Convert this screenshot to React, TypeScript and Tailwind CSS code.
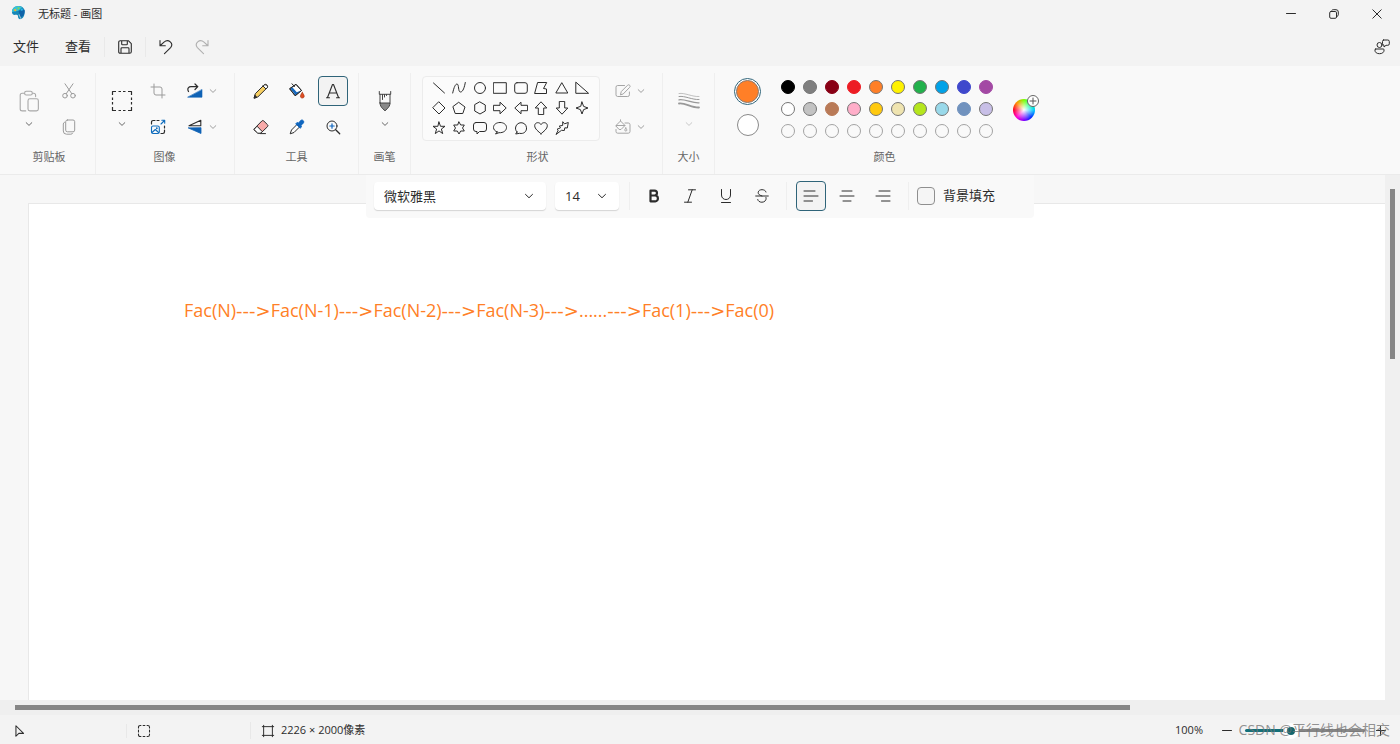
import { useState } from "react";
import type { ReactNode } from "react";

const SHAPES: { name: string; d: string }[] = [
    { name: "直线", d: "M1.5 2 12.5 12" },
    { name: "曲线", d: "M.7 12C2 6 3.500 3 5 3c2.200 0 .8 8 3.500 8C11 11 12.500 6 13.300 1.500" },
    { name: "椭圆形", d: "M12.500 7a5.500 5.500 0 1 1-11 0 5.500 5.500 0 0 1 11 0Z" },
    { name: "矩形", d: "M.7 1.700h12.600v10.600H.7Z" },
    { name: "圆角矩形", d: "M3 1.700h8q2.300 0 2.300 2.300v6q0 2.300-2.300 2.300H3Q.7 12.300.7 10V4Q.7 1.700 3 1.700Z" },
    { name: "多边形", d: "M4 1.500h8.700L9.500 7.500l3 .5v4.500H1Z" },
    { name: "三角形", d: "M7 2 12.800 12H1.200Z" },
    { name: "直角三角形", d: "M.8 1.500V12.300H13.200Z" },
    { name: "菱形", d: "M7 1 13 7 7 13 1 7Z" },
    { name: "五边形", d: "M7 1.500 13 6 10.800 12.500H3.200L1 6Z" },
    { name: "六边形", d: "M7 1 12.300 4v6L7 13 1.700 10V4Z" },
    { name: "右箭头", d: "M.8 4.300H7V1.200L13.200 7 7 12.800V9.700H.8Z" },
    { name: "左箭头", d: "M13.200 4.300H7V1.200L.8 7 7 12.800V9.700h6.200Z" },
    { name: "向上箭头", d: "M4.300 13.200V7H1.200L7 .8 12.800 7H9.700v6.200Z" },
    { name: "向下箭头", d: "M4.300.8V7H1.200L7 13.200 12.800 7H9.700V.8Z" },
    { name: "四角星", d: "M7 1 8.600 5.400 13 7 8.600 8.600 7 13 5.400 8.600 1 7 5.400 5.400Z" },
    { name: "五角星", d: "M7 1 8.500 5.300H13L9.400 8 10.700 12.600 7 9.900 3.300 12.600 4.600 8 1 5.300H5.500Z" },
    { name: "六角星", d: "M7 1 8.700 4H12.300L10.500 7 12.300 10H8.700L7 13 5.300 10H1.700L3.500 7 1.700 4H5.300Z" },
    { name: "圆角矩形标注", d: "M3 1.500h8q2.500 0 2.500 2.500v4q0 2.500-2.500 2.500H6.500L4 13V10.500H3Q.5 10.500.5 8V4Q.5 1.500 3 1.500Z" },
    { name: "椭圆形标注", d: "M4.200 11 2.500 13 6 11.700C10.500 12 13.500 9.500 13.500 6.500S10.600 1.500 7 1.500.5 3.500.5 6.500C.5 8.500 2 10.200 4.200 11Z" },
    { name: "云形标注", d: "M3 11 1.700 13 5.500 12.300C10 13.300 12.800 10.200 12.500 6.800 12.300 3.500 9.800 1.700 7 1.700S1.700 4 1.500 7C1.500 8.700 2 10 3 11Z" },
    { name: "心形", d: "M7 12.800C4.500 10.500.7 8 .7 4.700.7 1.200 5.500.6 7 3.600 8.500.6 13.300 1.200 13.300 4.700 13.300 8 9.500 10.500 7 12.800Z" },
    { name: "闪电形", d: "M8 1 9.500 2.800 13.300 1.500 12.300 7 9.800 6.800 9.300 9.500 6.500 9.300 1 13.500 3.200 9.300 2 8.300 5.500 6.800 4.300 5 7.300 4.500Z" },
];

const COLORS = [
    ["#000000", "#7f7f7f", "#880015", "#ed1c24", "#ff7f27", "#fff200", "#22b14c", "#00a2e8", "#3f48cc", "#a349a4"],
    ["#ffffff", "#c3c3c3", "#b97a57", "#ffaec9", "#ffc90e", "#efe4b0", "#b5e61d", "#99d9ea", "#7092be", "#c8bfe7"],
    ["", "", "", "", "", "", "", "", "", ""],
];

// these swatches have no visible outline
const PLAIN = ["#000000", "#880015", "#ed1c24", "#b97a57", "#3f48cc", "#7092be", "#a349a4"];

const CALLS = ["Fac(N)", "Fac(N-1)", "Fac(N-2)", "Fac(N-3)", "......", "Fac(1)", "Fac(0)"];

function Icon({ box = 16, className = "size-4", children }: { box?: number; className?: string; children: ReactNode }) {
    return (
        <svg viewBox={`0 0 ${box} ${box}`} className={`${className} shrink-0`} fill="none" stroke="currentColor" strokeLinecap="round" strokeLinejoin="round" aria-hidden="true">
            {children}
        </svg>
    );
}

function Chevron({ className = "size-2" }: { className?: string }) {
    return (
        <Icon box={8} className={className}>
            <path d="M1.200 2.700 4 5.400 6.800 2.700" strokeWidth=".8" />
        </Icon>
    );
}

function Tool({ label, active, onClick, children }: { label: string; active?: boolean; onClick?: () => void; children: ReactNode }) {
    return (
        <div className="flex size-9 items-center justify-center">
            <button
                aria-label={label}
                onClick={onClick}
                className={`flex size-[30px] items-center justify-center rounded border ${active ? "border-[#2f6479] bg-[#f3f3f3]" : "border-transparent"}`}
            >
                {children}
            </button>
        </div>
    );
}

function SplitTool({ label, children }: { label: string; children: ReactNode }) {
    return (
        <button aria-label={label} className="flex h-9 w-12 items-center justify-center gap-1.5">
            {children}
            <span className="text-[#888]"><Chevron /></span>
        </button>
    );
}

function BigTool({ label, muted, children }: { label: string; muted?: boolean; children: ReactNode }) {
    return (
        <button aria-label={label} className="flex w-9 flex-col items-center gap-2 pt-[17px]">
            {children}
            <span className={muted ? "text-[#bbb]" : "text-[#444]"}><Chevron /></span>
        </button>
    );
}

function Group({ title, className, children }: { title: string; className: string; children: ReactNode }) {
    return (
        <section aria-label={title} className={`flex shrink-0 flex-col items-center ${className}`}>
            <div className="flex h-[72px]">{children}</div>
            <h2 className="mt-0.5 text-[11px] leading-5 text-[#666]">{title}</h2>
        </section>
    );
}

function TitleBar() {
    return (
        <header className="flex h-7 shrink-0 items-center">
            <svg viewBox="0 0 16 16" className="mr-3 mb-1 ml-[11px] size-[15px]" aria-hidden="true">
                <path d="M8 1C3.500 1 1 4 1 7.500 1 10 3 11 5 10.500c2-.5 2.500.5 2.500 2 0 2 1.500 3 3 2.500C14 13.500 15 9 14.500 6 14 3 11.500 1 8 1Z" fill="#1687b8" />
                <path d="M8 1C3.500 1 1 4 1 7.500L8 6 12 2Z" fill="#39c3d4" />
                <path d="M8 6 14.500 5C15 9 13 13 10 13Z" fill="#0f63a8" />
                <circle cx="4.500" cy="5.500" r="1.200" fill="#f5b52e" />
                <circle cx="8" cy="3.500" r="1.200" fill="#7ed957" />
                <circle cx="11.500" cy="5" r="1.200" fill="#2bb5e6" />
                <path d="M8.500 10 10.500 14.500" stroke="#9fc3d3" strokeWidth="1.100" />
            </svg>
            <h1 className="text-[11px]">无标题 - 画图</h1>
            <div className="ml-auto flex pr-0.5">
                <button aria-label="最小化" className="flex h-7 w-[43px] items-center justify-center">
                    <Icon box={10} className="size-2.5"><path d="M.5 4.500h9" /></Icon>
                </button>
                <button aria-label="还原" className="flex h-7 w-[43px] items-center justify-center">
                    <Icon box={10} className="size-2.5">
                        <rect x=".7" y="2.500" width="6.800" height="6.800" rx="1.300" />
                        <path d="M2.700 1.500Q3.300.7 4.200.7H7q2.300 0 2.300 2.300v2.800q0 1-.9 1.500" />
                    </Icon>
                </button>
                <button aria-label="关闭" className="flex h-7 w-[43px] items-center justify-center">
                    <Icon box={10} className="size-2.5"><path d="M.8.8 9.200 9.200M9.200.8.8 9.200" /></Icon>
                </button>
            </div>
        </header>
    );
}

function MenuBar() {
    return (
        <nav aria-label="菜单" className="flex h-[38px] shrink-0 items-center text-[13px]">
            <button className="px-[13px] py-2">文件</button>
            <button className="px-[13px] py-2">查看</button>
            <div className="h-5 w-px bg-[#e9e9e9]" />
            <button aria-label="保存" className="flex h-8 w-10 items-center justify-center">
                <Icon className="size-4">
                    <path d="M3.300 1.700h8L14.300 4.700v8q0 1.600-1.600 1.600H3.300q-1.600 0-1.600-1.600V3.300q0-1.600 1.600-1.600ZM4.700 1.900v3q0 .8.8.8h4q.8 0 .8-.8v-3M4 14V9.700q0-.9.900-.9h6.200q.9 0 .9.900V14" strokeWidth="1.100" />
                </Icon>
            </button>
            <div className="h-5 w-px bg-[#e9e9e9]" />
            <button aria-label="撤消" className="ml-0.5 flex h-8 w-9 items-center justify-center">
                <Icon className="size-4"><path d="M2 1.500v5.300h5.300M2.300 6.500 6 3.100c4.500-3.700 10 1.400 6.600 5.500L6.500 14.700" strokeWidth="1.100" /></Icon>
            </button>
            <button aria-label="重做" disabled className="flex h-8 w-9 items-center justify-center text-[#b0b0b0]">
                <Icon className="size-4"><path d="M14 1.500v5.300H8.700M13.700 6.500 10 3.100C5.500-.6 0 4.500 3.400 8.600l6.100 6.100" strokeWidth="1.100" /></Icon>
            </button>
            <button aria-label="反馈" className="mr-2.5 ml-auto">
                <Icon className="size-4">
                    <circle cx="5.500" cy="6" r="2.500" />
                    <path d="M1.700 10h7.600q.8 0 .8 1c0 2.500-2 3.700-4.600 3.700S.9 13.500.9 11q0-1 .8-1ZM9.500 1h4.300q1.500 0 1.500 1.500v2.300q0 1.500-1.500 1.500H12L10 8V6.200Q8.500 6 8.500 4.800V2.500Q8.500 1 9.500 1Z" />
                </Icon>
            </button>
        </nav>
    );
}

function Ribbon({ color, setColor }: { color: string; setColor: (c: string) => void }) {
    const [tool, setTool] = useState("text");

    return (
        <div className="flex h-[109px] shrink-0 border-b border-[#ebebeb] bg-[#f9f9f9] pt-[7px] *:border-r *:border-[#efefef]">
            <Group title="剪贴板" className="w-24 pl-[3px]">
                <BigTool label="粘贴">
                    <Icon box={20} className="size-[22px] text-[#a8a8a8]">
                        <path d="M6 3H3.800Q2 3 2 4.800v12.400Q2 19 3.800 19H7M13 3h1.200Q16 3 16 4.800V6M7.500 1.200h4q1.500 0 1.500 1.700t-1.500 1.700h-4Q6 4.600 6 2.900t1.500-1.700ZM10.800 8h6q1.700 0 1.700 1.700v7.600q0 1.700-1.700 1.700h-6q-1.700 0-1.700-1.700V9.700Q9.100 8 10.800 8Z" />
                    </Icon>
                </BigTool>
                <div className="ml-1 text-[#9b9b9b]">
                    <Tool label="剪切">
                        <Icon>
                            <circle cx="4" cy="12.700" r="2.300" />
                            <circle cx="12" cy="12.700" r="2.300" />
                            <path d="M5.200 10.700 12 .8M10.800 10.700 4 .8" />
                        </Icon>
                    </Tool>
                    <Tool label="复制">
                        <Icon>
                            <rect x="4.700" y="1" width="9" height="11.800" rx="1.700" />
                            <path d="M3.500 3.200Q2.300 3.700 2.300 5v7q0 3.200 3.200 3.200h4.300q1.300 0 1.900-1" />
                        </Icon>
                    </Tool>
                </div>
            </Group>

            <Group title="图像" className="w-[139px] pr-px">
                <BigTool label="选择">
                    <Icon box={22} className="size-[22px]">
                        <path d="M1.500 5V1.500H5M17 1.500h3.500V5M20.500 17v3.500H17M5 20.500H1.500V17M7.500 1.500H10M12 1.500h2.500M7.500 20.500H10M12 20.500h2.500M1.500 7.500V10M1.500 12v2.500M20.500 7.500V10M20.500 12v2.500" strokeWidth="1.200" strokeLinecap="butt" />
                    </Icon>
                </BigTool>
                <div>
                    <Tool label="裁剪">
                        <Icon className="size-4 text-[#9b9b9b]"><path d="M4 1v9q0 2 2 2h9M1 4h9q2 0 2 2v9" /></Icon>
                    </Tool>
                    <Tool label="重设大小">
                        <Icon>
                            <path d="M1.500 5V3.200q0-1.700 1.700-1.700H5M7 1.500h2M14.500 7v2M14.500 11v1.800q0 1.700-1.700 1.700H11" strokeWidth="1.200" />
                            <g stroke="#0f6cbd" strokeWidth="1.100">
                                <rect x="1.500" y="7" width="7.800" height="7.500" rx="1.500" />
                                <path d="m2 13.500 3.300-3 3.300 3M11 5l3.500-3.500M11.800 1.300h2.900v2.900" />
                                <circle cx="6.800" cy="9.300" r=".4" />
                            </g>
                        </Icon>
                    </Tool>
                </div>
                <div className="ml-0.5">
                    <SplitTool label="旋转">
                        <Icon>
                            <path d="M1.500 8.500C-.3 5 2 3.700 4 3.700h6.500M8 1l2.800 2.700L8 6.500" strokeWidth="1.200" />
                            <path d="M15 6.800v7.400H1Z" fill="#0f62b5" stroke="#0f62b5" strokeWidth=".6" />
                        </Icon>
                    </SplitTool>
                    <SplitTool label="翻转">
                        <Icon>
                            <path d="M13.800 1.300v5.500H2Z" strokeWidth="1.100" />
                            <path d="M14 9v5.500L1.500 9Z" fill="#0f62b5" stroke="#0f62b5" strokeWidth=".8" />
                        </Icon>
                    </SplitTool>
                </div>
            </Group>

            <Group title="工具" className="w-[124px]">
                <div className="grid grid-cols-3">
                    <Tool label="铅笔" active={tool === "pencil"} onClick={() => setTool("pencil")}>
                        <Icon>
                            <path d="m1.200 14.800 1.100-4.100L11 2c2-2 4.800.8 3 2.900l-8.800 8.700Z" fill="#f7cf62" />
                            <path d="M10.800 2.300c2-2 5 .8 3.200 2.700L13 6 10 3Z" fill="#fff" />
                            <path d="m1.200 14.800.7-2.500 1.700 1.700Z" fill="currentColor" />
                        </Icon>
                    </Tool>
                    <Tool label="填充" active={tool === "fill"} onClick={() => setTool("fill")}>
                        <Icon>
                            <path d="M1 5.500 7 1.300l5.500 6.200-6 5Z" fill="#fff" />
                            <path d="m1.300 5.600 2-1.400L7.800 9.300 12 7.500l-5.500 4.800Z" fill="#1668bd" stroke="none" />
                            <path d="M1 5.500 7 1.300l5.500 6.200-6 5ZM3 .8l2.500 2.800" />
                            <path d="M13.300 9.500c3 3.500 2 5.500 0 5.500s-3-2 0-5.500Z" fill="#e04e25" stroke="#a8330d" strokeWidth=".7" />
                        </Icon>
                    </Tool>
                    <Tool label="文本" active={tool === "text"} onClick={() => setTool("text")}>
                        <Icon><path d="m2.500 14.500 5-13h1l5 13M4.300 10h7.400M1.500 14.700h3M11.500 14.700h3" strokeWidth="1.100" /></Icon>
                    </Tool>
                    <Tool label="橡皮擦" active={tool === "eraser"} onClick={() => setTool("eraser")}>
                        <Icon>
                            <path d="M1.200 9.800 8.800 2q1-1 2 0L14.500 5.700q1 1 0 2L8 14H5.200L1.200 10.800Z" fill="#f8aaa9" />
                            <path d="M1.200 10.300 4 7.200 9.200 12.500 7.500 14.200H5Z" fill="#fff" />
                            <path d="M7.500 14.600h5" />
                        </Icon>
                    </Tool>
                    <Tool label="颜色选取器" active={tool === "picker"} onClick={() => setTool("picker")}>
                        <Icon>
                            <path d="M8 5.500 2.500 11 1.200 14.800 5 13.500 10.500 8Z" fill="#fff" />
                            <path d="m7 4.500 1.500-1 1.500.7L11.200 2c2-2.500 5 .5 2.700 2.700L11.800 6l.7 1.500-1 1.500Z" fill="#0f66bf" stroke="#0f66bf" />
                        </Icon>
                    </Tool>
                    <Tool label="放大镜" active={tool === "zoom"} onClick={() => setTool("zoom")}>
                        <Icon>
                            <circle cx="7" cy="7" r="5" />
                            <path d="m10.700 10.700 4 4" strokeWidth="1.300" />
                            <path d="M7 4.800v4.400M4.800 7h4.400" stroke="#0f66bf" strokeWidth="1.200" />
                        </Icon>
                    </Tool>
                </div>
            </Group>

            <Group title="画笔" className="w-[52px]">
                <BigTool label="画笔">
                    <Icon box={22} className="size-[22px] text-[#444]">
                        <path d="M6 13h10c0 2.500-1.300 4-2.300 5.300L11 20.800 8.300 18.300C7.300 17 6 15.500 6 13Z" fill="#8a8a8a" />
                        <path d="M5.300 1.500v2.800h11.400V1.500M6 4.300V13M16 4.300V13M8.500 4.500v5M10.500 4.500v2.500M12.500 4.500v1" />
                    </Icon>
                </BigTool>
            </Group>

            <Group title="形状" className="w-[252px] pl-0.5">
                <div className="mt-[3px] grid h-[65px] w-[178px] grid-cols-8 content-center rounded border border-[#ececec] bg-[#fbfbfb] px-1.5 pb-0.5">
                    {SHAPES.map(s => (
                        <button key={s.name} aria-label={s.name} className="flex h-5 items-center justify-center">
                            <Icon box={14} className="size-3.5"><path d={s.d} /></Icon>
                        </button>
                    ))}
                </div>
                <div className="ml-1.5 text-[#a5a5a5]">
                    <SplitTool label="形状轮廓">
                        <Icon>
                            <path d="M9.500 2.500H2.700Q1 2.500 1 4.200v7.600q0 1.700 1.700 1.700h10q1.700 0 1.700-1.700V9M5.500 11.500l.8-3L12.500 2.300c1.500-1.500 3.500.7 2.200 2L8.500 10.700Z" />
                        </Icon>
                    </SplitTool>
                    <SplitTool label="形状填充">
                        <Icon>
                            <path d="M1 10.500v2q0 1.700 1.700 1.700h10.600q1.700 0 1.700-1.700V5.700Q15 4 13.300 4H10M1 6.500 5.500 2 10 6.500l-4 4H4.500ZM1.300 6.500h8.400M5.500 2V.8" />
                            <path d="M10.800 9c1.600 2 1.200 3 0 3s-1.600-1 0-3Z" />
                        </Icon>
                    </SplitTool>
                </div>
            </Group>

            <Group title="大小" className="w-[52px]">
                <BigTool label="大小" muted>
                    <Icon box={22} className="size-[22px] text-[#999]">
                        <path d="M1 3.500c6-1 13 3.500 20 3" strokeWidth=".6" />
                        <path d="M1 6.500c6-1 13 3.500 20 3" />
                        <path d="M1 9.800c6-1 13 3.500 20 3" strokeWidth="1.300" />
                        <path d="M1 13.500c6-1 13 4.500 20 4" strokeWidth="1.800" />
                    </Icon>
                </BigTool>
            </Group>

            <Group title="颜色" className="border-none pl-[19px]">
                <div className="flex w-[27px] flex-col items-center gap-[9px] pt-[5px]">
                    <button aria-label="颜色 1" className="flex size-[27px] items-center justify-center rounded-full border border-[#2f6479] bg-white">
                        <span className="size-[23px] rounded-full border border-[#8a7a70]" style={{ backgroundColor: color }} />
                    </button>
                    <button aria-label="颜色 2" className="size-[22px] rounded-full border border-[#8a8a8a] bg-white" />
                </div>
                <div className="mt-[3px] ml-4 grid h-[66px] grid-cols-10">
                    {COLORS.flat().map((c, i) => (
                        <button key={i} aria-label={c || "空"} disabled={!c} onClick={() => setColor(c)} className="flex size-[22px] items-center justify-center">
                            <span
                                className={`size-3.5 rounded-full border ${c ? "border-[#757575]" : "border-[#a3a3a3]"}`}
                                style={c ? { backgroundColor: c, borderColor: PLAIN.includes(c) ? c : undefined } : undefined}
                            />
                        </button>
                    ))}
                </div>
                <button aria-label="编辑颜色" className="relative mt-[26px] ml-4 size-[22px] rounded-full bg-[radial-gradient(circle,#fff_0%,transparent_65%),conic-gradient(#7dff00,#00ff80,#00cfff,#0030ff,#8000ff,#ff00d0,#ff0030,#ff9000,#7dff00)]">
                    <span className="absolute -top-1 -right-1 flex size-3 items-center justify-center rounded-full border border-[#666] bg-white text-[#555]">
                        <Icon box={8} className="size-2"><path d="M4 1v6M1 4h6" /></Icon>
                    </span>
                </button>
            </Group>
        </div>
    );
}

function TextToolbar() {
    const [align, setAlign] = useState("left");

    return (
        <div role="toolbar" aria-label="文本" className="absolute top-0 left-1/2 z-10 flex h-[43px] w-[668px] -translate-x-1/2 items-center rounded-b bg-[#f9f9f9] pb-px pl-2">
            <label className="relative">
                <span className="sr-only">字体</span>
                <select className="block h-7 w-[172px] appearance-none rounded bg-white pl-2.5 text-[13px] leading-7 shadow-[0_1px_1px_#d4d4d4]">
                    <option>微软雅黑</option>
                </select>
                <span className="pointer-events-none absolute top-[9px] right-3"><Chevron className="size-2.5" /></span>
            </label>
            <label className="relative ml-[9px]">
                <span className="sr-only">字号</span>
                <select className="block h-7 w-16 appearance-none rounded bg-white pl-2.5 text-[13px] leading-7 shadow-[0_1px_1px_#d4d4d4]">
                    <option>14</option>
                </select>
                <span className="pointer-events-none absolute top-[9px] right-3"><Chevron className="size-2.5" /></span>
            </label>
            <div className="mr-1.5 ml-2.5 h-7 w-px bg-[#efefef]" />
            <Tool label="加粗">
                <Icon><path d="M4.500 2.700h4c3.300 0 3.300 4.800 0 4.800h-4ZM4.500 7.500h4.700c3.600 0 3.600 5.800 0 5.800H4.500Z" strokeWidth="2.200" /></Icon>
            </Tool>
            <Tool label="倾斜">
                <Icon><path d="M6.500 1.800h7M2.500 14.200h7M10.200 1.800 5.800 14.200" /></Icon>
            </Tool>
            <Tool label="下划线">
                <Icon><path d="M3.500 1.500V7c0 6 9 6 9 0V1.500M3.500 14.500h9" /></Icon>
            </Tool>
            <Tool label="删除线">
                <Icon><path d="M12 4C11.500.8 4.500.8 4.200 4.300 4 6.500 6 7.300 8 8M1.700 8h12.600M12 9.500c1.500 5.500-7.500 6.500-8.300 2" /></Icon>
            </Tool>
            <div className="mx-1.5 h-7 w-px bg-[#efefef]" />
            <Tool label="左对齐" active={align === "left"} onClick={() => setAlign("left")}>
                <Icon><path d="M1 3h11M1 8h14M1 13h8.500" /></Icon>
            </Tool>
            <Tool label="居中" active={align === "center"} onClick={() => setAlign("center")}>
                <Icon><path d="M3 3h10M1 8h14M4 13h8" /></Icon>
            </Tool>
            <Tool label="右对齐" active={align === "right"} onClick={() => setAlign("right")}>
                <Icon><path d="M4 3h11M1 8h14M6.500 13H15" /></Icon>
            </Tool>
            <div className="mr-2 ml-[7px] h-7 w-px bg-[#efefef]" />
            <label className="flex items-center gap-2 text-[13px]">
                <input type="checkbox" className="size-[18px] appearance-none rounded border border-[#8f8f8f] bg-[#f5f5f5] checked:bg-[#1f6f78]" />
                背景填充
            </label>
        </div>
    );
}

function StatusBar() {
    const [zoom, setZoom] = useState(37);

    return (
        <footer className="relative flex h-[29px] shrink-0 items-center pt-0.5 text-[11px]">
            <div className="w-[126px] pl-3">
                <Icon className="size-3.5"><path d="M4.500 2v12l3.300-3.300h5.400Z" strokeWidth="1.200" /></Icon>
            </div>
            <div className="w-[124px] border-l border-[#e8e8e8] pl-2.5">
                <Icon className="size-3.5"><path d="M1.700 4.500V3.700q0-2 2-2h.8M11.500 1.700h.8q2 0 2 2v.8M14.300 11.500v.8q0 2-2 2h-.8M4.500 14.300h-.8q-2 0-2-2v-.8M7 1.700h2M7 14.300h2M1.700 7v2M14.300 7v2" strokeWidth="1.200" /></Icon>
            </div>
            <div className="flex items-center gap-1.5 border-l border-[#e8e8e8] pl-2.5">
                <Icon className="size-3.5"><path d="M1.500 3h13M1.500 13h13M3 1.500v13M13 1.500v13" strokeWidth="1.100" /></Icon>
                2226 × 2000像素
            </div>
            <div className="ml-auto flex items-center">
                <span>100%</span>
                <button aria-label="缩小" className="ml-4 flex size-4 items-center justify-center">
                    <Icon box={10} className="size-2.5"><path d="M.5 4.500h9" /></Icon>
                </button>
                <input
                    type="range"
                    aria-label="缩放"
                    value={zoom}
                    onChange={e => setZoom(Number(e.target.value))}
                    className="mr-2 ml-2.5 h-[3px] w-30 appearance-none rounded-full [&::-webkit-slider-thumb]:size-4 [&::-webkit-slider-thumb]:appearance-none [&::-webkit-slider-thumb]:rounded-full [&::-webkit-slider-thumb]:border-4 [&::-webkit-slider-thumb]:border-white [&::-webkit-slider-thumb]:bg-[#14666d]"
                    style={{ background: `linear-gradient(to right, #14707a ${zoom}%, #868686 ${zoom}%)` }}
                />
                <button aria-label="放大" className="mr-[11px] flex size-4 items-center justify-center">
                    <Icon box={10} className="size-2.5"><path d="M.5 4.500h9M4.500 .5v9" /></Icon>
                </button>
            </div>
            <p className="pointer-events-none absolute top-[5px] right-2.5 text-sm leading-5 whitespace-nowrap text-[#777]/80">CSDN @平行线也会相交</p>
        </footer>
    );
}

export default function App() {
    const [color, setColor] = useState("#ff7f27");

    return (
        <div className="flex h-screen flex-col overflow-hidden bg-[#f3f3f3] font-['Open_Sans','Noto_Sans_CJK_SC',sans-serif] text-[#2c2c2c]">
            <TitleBar />
            <MenuBar />
            <Ribbon color={color} setColor={setColor} />
            <main className="relative flex min-h-0 flex-1">
                <TextToolbar />
                <div className="min-w-0 flex-1 bg-[#f7f7f7] pt-7 pl-7">
                    <div className="h-full border-t border-l border-[#e8e8e8] bg-white pt-[94px] pl-[155px]">
                        <p className="text-lg leading-6 whitespace-nowrap" style={{ color }}>
                            {CALLS.map((call, i) => (
                                <span key={call}>
                                    {i > 0 && <span className="font-['DejaVu_Sans',sans-serif]">---&gt;</span>}
                                    {call}
                                </span>
                            ))}
                        </p>
                    </div>
                </div>
                <div className="flex w-[15px] justify-center bg-[#f0f0f0] pt-3.5">
                    <div className="h-1/3 w-[5px] bg-[#868686]" />
                </div>
            </main>
            <div className="flex h-[15px] shrink-0 items-center bg-[#efefef] pl-[15px]">
                <div className="h-[5px] w-[80.5%] bg-[#868686]" />
            </div>
            <StatusBar />
        </div>
    );
}
